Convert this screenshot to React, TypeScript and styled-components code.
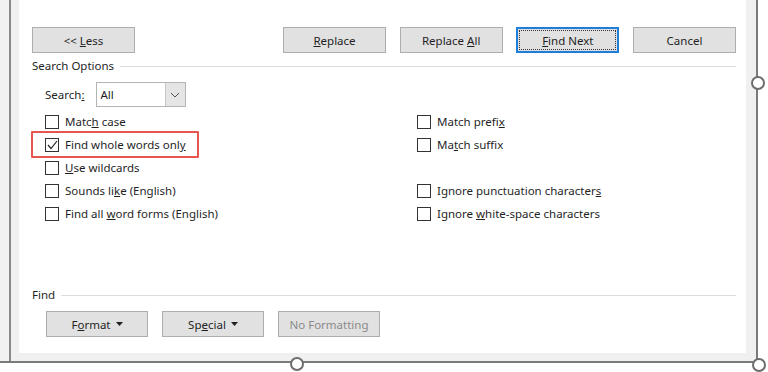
import React from "react";
import styled, { createGlobalStyle } from "styled-components";

const Global = createGlobalStyle`
  html, body { margin: 0; padding: 0; background: #ffffff; }
  body { font-family: "Noto Sans", "Open Sans", sans-serif; font-size: 11.5px; color: #1f1f1f; }
  * { box-sizing: border-box; }
`;

const Page = styled.div`
  position: relative;
  width: 768px;
  height: 372px;
  background: #ffffff;
  overflow: hidden;
`;

const Frame = styled.div`
  width: 758px;
  height: 363px;
  display: flex;
  background: #f0f0f0;
  border-right: 2px solid #7a7a7a;
  border-bottom: 2px solid #7a7a7a;
`;

const Gutter = styled.div`
  width: 11px;
  background: #f2f2f2;
  border-right: 2px solid #8a8a8a;
`;

const Inner = styled.div`
  flex: 1;
  display: flex;
  padding: 0 10px 8px 8px;
  background: #f0f0f0;
`;

const Dialog = styled.div`
  flex: 1;
  background: #ffffff;
  padding: 27px 10px 0 13px;
  display: flex;
  flex-direction: column;
`;

const ButtonRow = styled.div`
  display: flex;
  justify-content: space-between;
  height: 26px;
`;

const RightGroup = styled.div`
  width: 453px;
  display: flex;
  justify-content: space-between;
`;

const Button = styled.div<{ $focused?: boolean; $disabled?: boolean; $w?: number }>`
  position: relative;
  width: ${(p) => p.$w ?? 103}px;
  height: 26px;
  display: flex;
  align-items: center;
  justify-content: center;
  background: #e1e1e1;
  border: ${(p) => (p.$focused ? "2px solid #1e7fd8" : "1px solid #adadad")};
  color: ${(p) => (p.$disabled ? "#8a8a8a" : "#1f1f1f")};
  gap: 5px;
  ${(p) =>
    p.$focused &&
    `&::after {
      content: "";
      position: absolute;
      inset: 1px;
      border: 1px dotted #333;
    }`}
`;

const SectionHeader = styled.div<{ $mt: number }>`
  display: flex;
  align-items: center;
  gap: 6px;
  margin-top: ${(p) => p.$mt}px;
  height: 16px;
  line-height: 16px;
`;

const HeaderLine = styled.div`
  flex: 1;
  height: 1px;
  background: #dcdcdc;
`;

const SearchRow = styled.div`
  display: flex;
  align-items: center;
  margin: 8px 0 0 13px;
  height: 25px;
  gap: 11px;
`;

const Select = styled.div`
  width: 90px;
  height: 25px;
  display: flex;
  border: 1px solid #b4b4b4;
  background: #ffffff;
`;

const SelectValue = styled.div`
  flex: 1;
  padding-left: 4px;
  display: flex;
  align-items: center;
`;

const SelectArrow = styled.div`
  width: 20px;
  background: #e5e5e5;
  border-left: 1px solid #c8c8c8;
  display: flex;
  align-items: center;
  justify-content: center;
`;

const OptionsGrid = styled.div`
  display: grid;
  grid-template-columns: 372px 1fr;
  grid-auto-rows: 23px;
  margin: 3px 0 0 13px;
`;

const Option = styled.div<{ $highlight?: boolean; $col: number }>`
  position: relative;
  grid-column: ${(p) => p.$col};
  display: flex;
  align-items: center;
  gap: 6px;
  ${(p) =>
    p.$highlight &&
    `&::before {
      content: "";
      position: absolute;
      top: -2px;
      bottom: -2px;
      left: -14px;
      width: 164px;
      border: 2.5px solid #e5574e;
      border-radius: 1px;
    }`}
`;

const Box = styled.div`
  width: 14px;
  height: 14px;
  border: 1px solid #333;
  background: #fff;
  display: flex;
  align-items: center;
  justify-content: center;
`;

const Spacer = styled.div`
  grid-column: 2;
`;

const BottomButtons = styled.div`
  display: flex;
  gap: 14px;
  margin: 8px 0 0 14px;
`;

const Tri = () => (
  <svg width="7" height="4" viewBox="0 0 7 4">
    <polygon points="0,0 7,0 3.5,4" fill="#1f1f1f" />
  </svg>
);

const Handle = styled.div<{ $x: number; $y: number }>`
  position: absolute;
  left: ${(p) => p.$x - 7}px;
  top: ${(p) => p.$y - 7}px;
  width: 14px;
  height: 14px;
  border-radius: 50%;
  border: 2px solid #6d6d6d;
  background: #ffffff;
`;

const Check = ({ on }: { on?: boolean }) => (
  <Box>
    {on && (
      <svg width="11" height="10" viewBox="0 0 11 10">
        <polyline points="1,5 4,8.5 10,1" fill="none" stroke="#222" strokeWidth="1.2" />
      </svg>
    )}
  </Box>
);

export default function App() {
  return (
    <>
      <Global />
      <Page>
        <Frame>
          <Gutter />
          <Inner>
            <Dialog>
              <ButtonRow>
                <Button><span>&lt;&lt; <u>L</u>ess</span></Button>
                <RightGroup>
                  <Button><span><u>R</u>eplace</span></Button>
                  <Button><span>Replace <u>A</u>ll</span></Button>
                  <Button $focused><span><u>F</u>ind Next</span></Button>
                  <Button><span>Cancel</span></Button>
                </RightGroup>
              </ButtonRow>

              <SectionHeader $mt={5}>
                <span>Search Options</span>
                <HeaderLine />
              </SectionHeader>

              <SearchRow>
                <span>Search<u>:</u></span>
                <Select>
                  <SelectValue>All</SelectValue>
                  <SelectArrow>
                    <svg width="10" height="6" viewBox="0 0 10 6">
                      <polyline points="1,1 5,5 9,1" fill="none" stroke="#555" strokeWidth="1" />
                    </svg>
                  </SelectArrow>
                </Select>
              </SearchRow>

              <OptionsGrid>
                <Option $col={1}><Check /><span>Matc<u>h</u> case</span></Option>
                <Option $col={2}><Check /><span>Match prefi<u>x</u></span></Option>
                <Option $col={1} $highlight><Check on /><span>Find whole words onl<u>y</u></span></Option>
                <Option $col={2}><Check /><span>Ma<u>t</u>ch suffix</span></Option>
                <Option $col={1}><Check /><span><u>U</u>se wildcards</span></Option>
                <Spacer />
                <Option $col={1}><Check /><span>Sounds li<u>k</u>e (English)</span></Option>
                <Option $col={2}><Check /><span>Ignore punctuation character<u>s</u></span></Option>
                <Option $col={1}><Check /><span>Find all <u>w</u>ord forms (English)</span></Option>
                <Option $col={2}><Check /><span>Ignore <u>w</u>hite-space characters</span></Option>
              </OptionsGrid>

              <SectionHeader $mt={62}>
                <span>Find</span>
                <HeaderLine />
              </SectionHeader>

              <BottomButtons>
                <Button $w={102}><span>F<u>o</u>rmat</span><Tri /></Button>
                <Button $w={102}><span>Sp<u>e</u>cial</span><Tri /></Button>
                <Button $w={102} $disabled><span>No Formatting</span></Button>
              </BottomButtons>
            </Dialog>
          </Inner>
        </Frame>
        <Handle $x={758} $y={83} />
        <Handle $x={297} $y={364} />
        <Handle $x={759} $y={365} />
      </Page>
    </>
  );
}
